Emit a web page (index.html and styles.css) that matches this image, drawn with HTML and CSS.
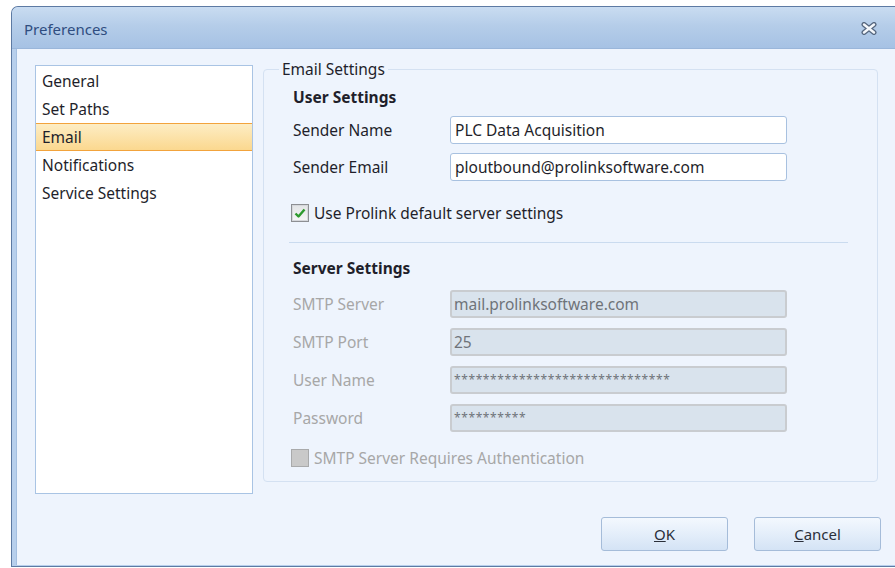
FILE: index.html
```html
<!DOCTYPE html>
<html lang="en">
<head>
<meta charset="utf-8">
<title>Preferences</title>
<link rel="stylesheet" href="styles.css">
</head>
<body>
<div class="window">
  <div class="titlebar">
    <span class="title">Preferences</span>
    <svg class="close" width="16" height="13" viewBox="0 0 16 13" aria-label="Close">
      <path d="M3 2.5 L13 10.5 M13 2.5 L3 10.5" stroke="#56677f" stroke-width="5" stroke-linecap="round" fill="none"/>
      <path d="M3 2.5 L13 10.5 M13 2.5 L3 10.5" stroke="#f4f7fb" stroke-width="2.4" stroke-linecap="round" fill="none"/>
    </svg>
  </div>
  <div class="client">
    <div class="main">
      <ul class="nav">
        <li>General</li>
        <li>Set Paths</li>
        <li class="active">Email</li>
        <li>Notifications</li>
        <li>Service Settings</li>
      </ul>
      <fieldset class="group">
        <legend>Email Settings</legend>
        <div class="section-title">User Settings</div>
        <div class="row"><span class="label">Sender Name</span><div class="field">PLC Data Acquisition</div></div>
        <div class="row"><span class="label">Sender Email</span><div class="field">ploutbound@prolinksoftware.com</div></div>
        <div class="check">
          <span class="box checked">
            <svg width="12" height="11" viewBox="0 0 12 11"><path d="M1.5 5.5 L4.5 8.5 L10.5 1.5" stroke="#2d9a2d" stroke-width="2.4" fill="none" stroke-linejoin="round"/></svg>
          </span>
          <span>Use Prolink default server settings</span>
        </div>
        <div class="separator"></div>
        <div class="section-title second">Server Settings</div>
        <div class="disabled-rows">
          <div class="row off"><span class="label">SMTP Server</span><div class="field">mail.prolinksoftware.com</div></div>
          <div class="row off"><span class="label">SMTP Port</span><div class="field">25</div></div>
          <div class="row off"><span class="label">User Name</span><div class="field mask">******************************</div></div>
          <div class="row off"><span class="label">Password</span><div class="field mask">**********</div></div>
        </div>
        <div class="check off">
          <span class="box"></span>
          <span>SMTP Server Requires Authentication</span>
        </div>
      </fieldset>
    </div>
    <div class="buttons">
      <button class="btn"><u>O</u>K</button>
      <button class="btn"><u>C</u>ancel</button>
    </div>
  </div>
</div>
</body>
</html>
```

FILE: styles.css
```css
html, body {
  margin: 0;
  padding: 0;
  background: #ffffff;
  overflow: hidden;
}

body {
  width: 895px;
  height: 568px;
  font-family: "Noto Sans", "Open Sans", sans-serif;
  font-size: 15.5px;
  color: #1f1f2b;
}

.window {
  margin: 6px 0 0 11px;
  width: 900px;
  height: 561px;
  box-sizing: border-box;
  border: 1px solid #5d7aa3;
  border-right: none;
  border-top-left-radius: 7px;
  background: #b7cfec;
  padding: 0 0 1px 4px;
  display: flex;
  flex-direction: column;
}

.titlebar {
  height: 41px;
  margin-left: -4px;
  padding-left: 12px;
  padding-right: 34px;
  border-top-left-radius: 6px;
  background: linear-gradient(#c9dcf1 0%, #b5cde9 45%, #a6c2e4 100%);
  display: flex;
  align-items: center;
  justify-content: space-between;
  border-bottom: 1px solid #9ab6da;
}

.title {
  color: #2f4d80;
  font-size: 15px;
  margin-top: 2px;
}

.close {
  margin-top: 2px;
}

.client {
  flex: 1;
  background: #eef4fd;
  padding: 10px 0 0 18px;
  border-left: 1px solid #a4bfe0;
}

.main {
  display: flex;
  align-items: flex-start;
  gap: 10px;
  width: 843px;
}

.nav {
  list-style: none;
  margin: 6px 0 0 0;
  padding: 1px 0 0 0;
  width: 218px;
  height: 429px;
  box-sizing: border-box;
  background: #ffffff;
  border: 1px solid #a9c4e4;
}

.nav li {
  height: 28px;
  line-height: 28px;
  padding-left: 6px;
  box-sizing: border-box;
}

.nav li.active {
  background: linear-gradient(#fdedc4, #fbd88f);
  border-top: 1px solid #f2a33c;
  border-bottom: 1px solid #f2a33c;
  line-height: 26px;
}

.group {
  margin: 0;
  width: 615px;
  height: 423px;
  box-sizing: border-box;
  border: 1px solid #d4e1f2;
  border-radius: 4px;
  padding: 0 0 0 29px;
  min-width: 0;
}

.group legend {
  margin-left: -14px;
  padding: 0 3px;
  line-height: 20px;
  margin-bottom: 0;
}

.section-title {
  font-weight: bold;
  height: 20px;
  line-height: 20px;
  margin-top: 8px;
}

.section-title.second {
  margin-top: 15px;
}

.row {
  display: flex;
  align-items: center;
  margin-top: 9px;
}

.label {
  width: 157px;
  flex: none;
}

.field {
  width: 337px;
  height: 28px;
  box-sizing: border-box;
  background: #ffffff;
  border: 1px solid #a8c1e0;
  border-radius: 3px;
  padding: 0 4px;
  line-height: 26px;
  white-space: nowrap;
  overflow: hidden;
}

.disabled-rows {
  margin-top: 12px;
}

.disabled-rows .row {
  margin-top: 10px;
}

.disabled-rows .row:first-child {
  margin-top: 0;
}

.row.off .label {
  color: #a7a7a7;
}

.row.off .field {
  background: #d9e3ed;
  border: 2px solid #c9ccd0;
  color: #6f7379;
  padding: 0 2px;
  line-height: 24px;
}

.field.mask {
  font-size: 12px;
  color: #7c8ca2;
  letter-spacing: 0.6px;
}

.check {
  display: flex;
  align-items: center;
  gap: 5px;
  margin-top: 21px;
  margin-left: -2px;
}

.check.off {
  margin-top: 15px;
  color: #a7a7a7;
}

.box {
  width: 18px;
  height: 18px;
  box-sizing: border-box;
  border: 1px solid #8d8f93;
  background: linear-gradient(#e2e4e6, #f6f6f6);
  display: flex;
  align-items: center;
  justify-content: center;
  padding: 1px;
}

.box.checked {
  box-shadow: inset 0 0 0 1px #d6d8dc;
}

.check.off .box {
  border-color: #a9aaab;
  background: #c9c9c9;
}

.separator {
  height: 1px;
  background: #cadbef;
  width: 559px;
  margin: 18px 0 0 -4px;
}

.buttons {
  display: flex;
  justify-content: flex-end;
  gap: 26px;
  width: 846px;
  margin-top: 23px;
}

.btn {
  width: 127px;
  height: 34px;
  box-sizing: border-box;
  border: 1px solid #a5bcd9;
  border-radius: 3px;
  background: linear-gradient(#f3f8fe 0%, #e4eefa 50%, #d4e3f5 100%);
  font-family: "Noto Sans", "Open Sans", sans-serif;
  font-size: 15px;
  color: #2a2f3a;
  padding: 0;
}
```
